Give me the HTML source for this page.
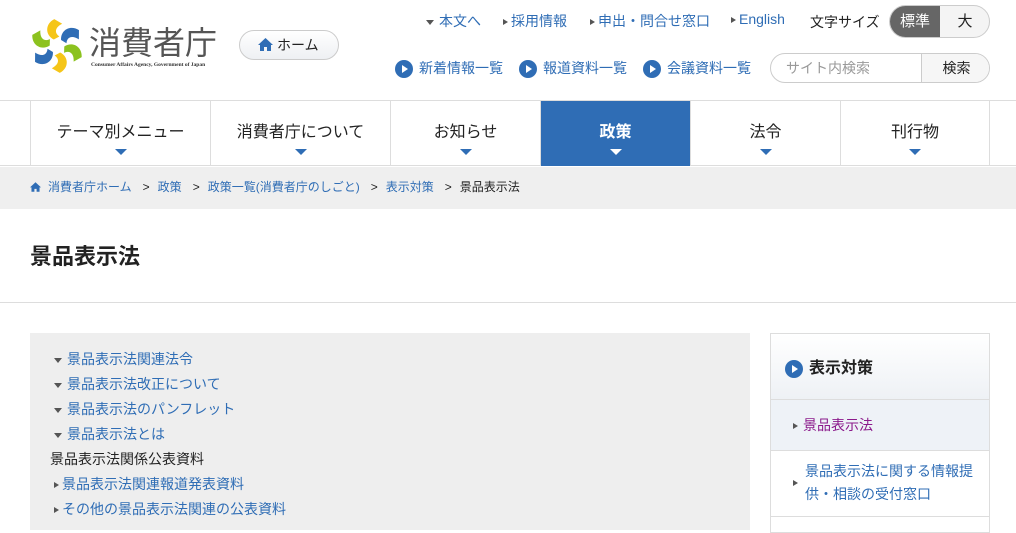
<!DOCTYPE html>
<html><head><meta charset="utf-8"><style>
*{margin:0;padding:0;box-sizing:border-box}
body{width:1016px;height:530px;overflow:hidden;background:#fff;font-family:"Liberation Sans","Noto Sans CJK JP",sans-serif;color:#222;position:relative}
.a{position:absolute}
a,.lk{color:#2f6db5;text-decoration:none}
.tri{display:inline-block;width:0;height:0;border-left:5px solid #555;border-top:3.5px solid transparent;border-bottom:3.5px solid transparent;margin-right:5px;vertical-align:middle}
.dtri{display:inline-block;width:0;height:0;border-top:5px solid #555;border-left:4px solid transparent;border-right:4px solid transparent;margin-right:5px;vertical-align:middle}
.circ{display:inline-block;width:18px;height:18px;border-radius:50%;background:#2f6db5;position:relative;vertical-align:middle;margin-right:6px}
.circ:after{content:"";position:absolute;left:7px;top:5px;border-left:6px solid #fff;border-top:4px solid transparent;border-bottom:4px solid transparent}
.nav{position:absolute;top:100px;left:0;width:1016px;height:66px;border-top:1px solid #ddd;border-bottom:1px solid #ddd}
.ni{position:absolute;top:0;height:65px;border-left:1px solid #ddd;text-align:center;font-size:16px;padding-top:17px;color:#222}
.ni:after{content:"";position:absolute;left:50%;margin-left:-6px;top:48px;border-top:6px solid #2f6db5;border-left:6px solid transparent;border-right:6px solid transparent}
.ni.on{background:#2f6db5;color:#fff;font-weight:bold}
.ni.on:after{border-top-color:#fff}
.list div{font-size:14px;height:25px;line-height:25px}
.gt{margin:0 8px 0 11px}
</style></head><body>
<svg class="a" style="left:29px;top:19px" width="56" height="54" viewBox="-28 -27 56 54">
<defs><path id="bl" d="M-2 -7 C-10 -13 -8 -24 2 -27 L9 -21 C2 -19 -1 -14 4 -9 Z"/></defs>
<use href="#bl" fill="#f5c518" transform="rotate(-10)"/>
<use href="#bl" fill="#2f6db5" transform="rotate(50)"/>
<use href="#bl" fill="#8cc21f" transform="rotate(110)"/>
<use href="#bl" fill="#f5c518" transform="rotate(170)"/>
<use href="#bl" fill="#2f6db5" transform="rotate(230)"/>
<use href="#bl" fill="#8cc21f" transform="rotate(290)"/>
</svg>
<div class="a" style="left:89px;top:23px;font-size:32px;color:#555;line-height:40px">消費者庁</div>
<div class="a" style="left:91px;top:62px;font-size:5.5px;color:#333;font-family:'Liberation Serif',serif;font-weight:bold">Consumer Affairs Agency, Government of Japan</div>
<div class="a" style="left:239px;top:30px;width:100px;height:30px;border:1px solid #ccc;border-radius:15px;background:linear-gradient(#fff,#eef0f3);font-size:14px;line-height:28px;padding-left:18px">
<svg width="15" height="13" viewBox="0 0 15 13" style="vertical-align:-1px;margin-right:4px"><path d="M7.5 0 L15 7 H13 V13 H9 V9 H6 V13 H2 V7 H0 Z" fill="#2f6db5"/></svg>ホーム</div>
<div class="a" style="top:11px;left:426px;font-size:14px;white-space:nowrap"><span class="dtri"></span><a>本文へ</a></div>
<div class="a" style="top:11px;left:503px;font-size:14px"><span class="tri" style="margin-right:3px"></span><a>採用情報</a></div>
<div class="a" style="top:11px;left:590px;font-size:14px"><span class="tri" style="margin-right:3px"></span><a>申出・問合せ窓口</a></div>
<div class="a" style="top:11px;left:731px;font-size:14px"><span class="tri" style="margin-right:3px"></span><a>English</a></div>
<div class="a" style="top:12px;left:810px;font-size:14px">文字サイズ</div>
<div class="a" style="top:5px;left:889px;width:101px;height:33px;border:1px solid #ccc;border-radius:17px;overflow:hidden;background:#f4f4f4;font-size:15px;line-height:31px">
<div class="a" style="left:0;top:0;width:50px;height:33px;background:#666;color:#fff;text-align:center">標準</div>
<div class="a" style="left:50px;top:0;width:50px;text-align:center">大</div></div>
<div class="a" style="top:58px;left:395px;font-size:14px"><span class="circ"></span><a>新着情報一覧</a></div>
<div class="a" style="top:58px;left:519px;font-size:14px"><span class="circ"></span><a>報道資料一覧</a></div>
<div class="a" style="top:58px;left:643px;font-size:14px"><span class="circ"></span><a>会議資料一覧</a></div>
<div class="a" style="top:53px;left:770px;width:220px;height:30px;border:1px solid #ccc;border-radius:15px;overflow:hidden;font-size:14px;line-height:28px">
<div class="a" style="left:15px;color:#999">サイト内検索</div>
<div class="a" style="left:150px;top:0;width:70px;height:30px;border-left:1px solid #ccc;background:#f6f6f6;text-align:center">検索</div></div>
<div class="nav">
<div class="ni" style="left:30px;width:180px">テーマ別メニュー</div>
<div class="ni" style="left:210px;width:180px">消費者庁について</div>
<div class="ni" style="left:390px;width:150px">お知らせ</div>
<div class="ni on" style="left:540px;width:150px">政策</div>
<div class="ni" style="left:690px;width:150px">法令</div>
<div class="ni" style="left:840px;width:150px;border-right:1px solid #ddd">刊行物</div>
</div>
<div class="a" style="top:167px;left:0;width:1016px;height:42px;background:#efefef;font-size:12px;line-height:40px;padding-left:30px;white-space:nowrap">
<svg width="11" height="10" viewBox="0 0 15 13" style="vertical-align:-1px;margin-right:7px"><path d="M7.5 0 L15 7 H13 V13 H9 V9 H6 V13 H2 V7 H0 Z" fill="#2f6db5"/></svg><a>消費者庁ホーム</a><span class="gt">&gt;</span><a>政策</a><span class="gt">&gt;</span><a>政策一覧(消費者庁のしごと)</a><span class="gt">&gt;</span><a>表示対策</a><span class="gt">&gt;</span>景品表示法</div>
<div class="a" style="top:239px;left:30px;font-size:22px;font-weight:bold">景品表示法</div>
<div class="a" style="top:302px;left:0;width:1016px;height:1px;background:#ddd"></div>
<div class="a list" style="top:333px;left:30px;width:720px;height:197px;background:#eeeeee;padding:14px 0 0 24px">
<div><span class="dtri"></span><a>景品表示法関連法令</a></div>
<div><span class="dtri"></span><a>景品表示法改正について</a></div>
<div><span class="dtri"></span><a>景品表示法のパンフレット</a></div>
<div><span class="dtri"></span><a>景品表示法とは</a></div>
<div style="margin-left:-4px">景品表示法関係公表資料</div>
<div><span class="tri" style="margin-right:3px"></span><a>景品表示法関連報道発表資料</a></div>
<div><span class="tri" style="margin-right:3px"></span><a>その他の景品表示法関連の公表資料</a></div>
</div>
<div class="a" style="top:333px;left:770px;width:220px;height:200px;border:1px solid #ddd">
<div style="height:66px;border-bottom:1px solid #ddd;background:linear-gradient(#fff,#eef1f5);padding:20px 0 0 14px;font-size:16px;font-weight:bold"><span class="circ"></span>表示対策</div>
<div style="height:51px;border-bottom:1px solid #ddd;background:#eef2f7;padding:15px 0 0 22px;font-size:14px"><span class="tri"></span><span style="color:#8b1a8b">景品表示法</span></div>
<div style="height:66px;border-bottom:1px solid #ddd;padding:9px 0 0 22px;font-size:14px;line-height:23px;position:relative"><span class="tri" style="position:absolute;left:22px;top:29px"></span><div style="padding-left:12px"><a>景品表示法に関する情報提供・相談の受付窓口</a></div></div>
</div>
</body></html>
